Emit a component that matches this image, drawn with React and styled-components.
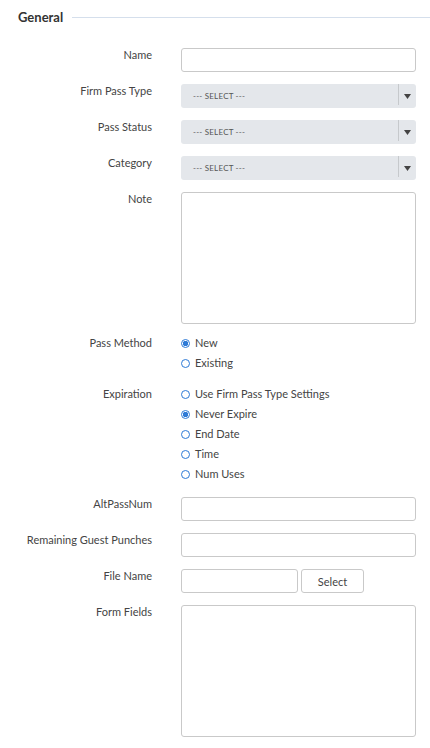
import React from 'react'
import styled, { createGlobalStyle } from 'styled-components'

const GlobalStyle = createGlobalStyle`
  body {
    margin: 0;
    background: #fff;
    font-family: Lato, "Noto Sans", sans-serif;
    color: #444;
  }
`

const App = () => {
  return (
    <>
      <GlobalStyle />
      <Page>
        <Legend>
          <LegendText>General</LegendText>
          <LegendLine />
        </Legend>

        <Row>
          <Label>Name</Label>
          <Input />
        </Row>
        <Row>
          <Label>Firm Pass Type</Label>
          <Select />
        </Row>
        <Row>
          <Label>Pass Status</Label>
          <Select />
        </Row>
        <Row>
          <Label>Category</Label>
          <Select />
        </Row>
        <Row>
          <Label>Note</Label>
          <TextArea />
        </Row>
        <Row gap={17}>
          <Label>Pass Method</Label>
          <RadioGroup>
            <Radio checked>New</Radio>
            <Radio>Existing</Radio>
          </RadioGroup>
        </Row>
        <Row gap={16}>
          <Label>Expiration</Label>
          <RadioGroup>
            <Radio>Use Firm Pass Type Settings</Radio>
            <Radio checked>Never Expire</Radio>
            <Radio>End Date</Radio>
            <Radio>Time</Radio>
            <Radio>Num Uses</Radio>
          </RadioGroup>
        </Row>
        <Row>
          <Label>AltPassNum</Label>
          <Input />
        </Row>
        <Row>
          <Label>Remaining Guest Punches</Label>
          <Input />
        </Row>
        <Row>
          <Label>File Name</Label>
          <FileGroup>
            <FileInput />
            <Button>Select</Button>
          </FileGroup>
        </Row>
        <Row>
          <Label>Form Fields</Label>
          <TextArea />
        </Row>
      </Page>
    </>
  )
}

const Select = () => (
  <SelectBox>
    <SelectText>--- SELECT ---</SelectText>
    <SelectArrow>
      <svg width="7" height="5" viewBox="0 0 7 5">
        <path d="M0 0h7L3.5 5z" fill="#444" />
      </svg>
    </SelectArrow>
  </SelectBox>
)

const Radio = ({ checked, children }) => (
  <RadioItem>
    <RadioDot checked={checked} />
    {children}
  </RadioItem>
)

const Page = styled.div`
  padding: 9px 0 11px 18px;
  font-size: 11px;
`

const Legend = styled.div`
  display: flex;
  align-items: center;
  gap: 9px;
  margin-bottom: 23px;
`

const LegendText = styled.div`
  font-size: 13px;
  font-weight: 700;
  color: #333;
  line-height: 16px;
`

const LegendLine = styled.div`
  flex: 1;
  height: 1px;
  background: #d5dfec;
`

const Row = styled.div`
  display: grid;
  grid-template-columns: 134px 235px;
  column-gap: 29px;
  margin-bottom: ${p => (p.gap ?? 12)}px;
`

const Label = styled.div`
  text-align: right;
  line-height: 14px;
  color: #444;
`

const Input = styled.div`
  height: 24px;
  box-sizing: border-box;
  border: 1px solid #c9c9c9;
  border-radius: 3px;
  background: #fff;
`

const TextArea = styled(Input)`
  height: 132px;
`

const SelectBox = styled.div`
  height: 24px;
  display: flex;
  align-items: stretch;
  background: #e4e7eb;
  border-radius: 3px;
`

const SelectText = styled.div`
  flex: 1;
  display: flex;
  align-items: center;
  padding-left: 12px;
  font-size: 8px;
  color: #555;
  letter-spacing: 0.2px;
`

const SelectArrow = styled.div`
  width: 17px;
  display: flex;
  align-items: center;
  justify-content: center;
  border-left: 1px solid #c6c9cc;
  margin-bottom: 3px;
  padding-top: 3px;
`

const RadioGroup = styled.div`
  display: flex;
  flex-direction: column;
  gap: 6px;
`

const RadioItem = styled.div`
  display: flex;
  align-items: center;
  gap: 5px;
  line-height: 14px;
  color: #444;
`

const RadioDot = styled.span`
  width: 9px;
  height: 9px;
  box-sizing: border-box;
  border-radius: 50%;
  border: 1px solid #2e7ad6;
  background: ${p => (p.checked ? 'radial-gradient(circle, #2e7ad6 0 2.5px, #fff 3px)' : '#fff')};
`

const FileGroup = styled.div`
  display: flex;
  gap: 3px;
`

const FileInput = styled(Input)`
  width: 117px;
`

const Button = styled.div`
  width: 63px;
  height: 24px;
  box-sizing: border-box;
  border: 1px solid #c9c9c9;
  border-radius: 3px;
  display: flex;
  align-items: center;
  justify-content: center;
  color: #444;
`

export default App
